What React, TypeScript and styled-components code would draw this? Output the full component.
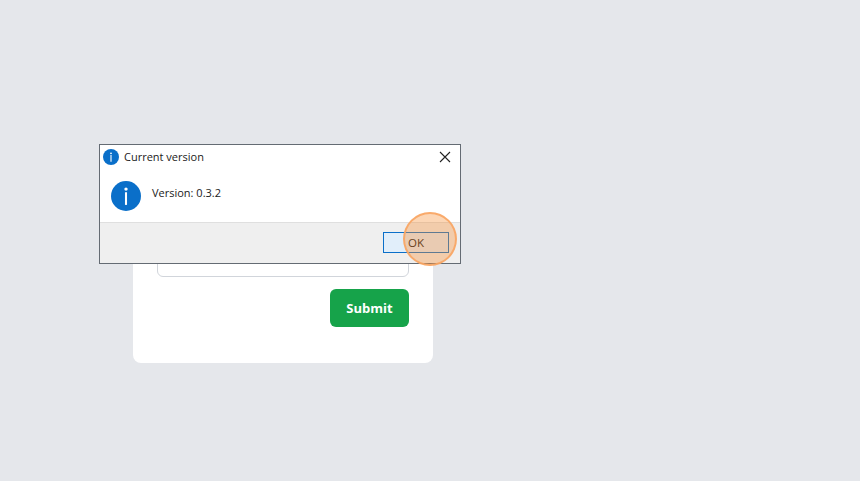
import { createGlobalStyle } from "styled-components";
import styled from "styled-components";

const GlobalStyle = createGlobalStyle`
  html, body {
    margin: 0;
    padding: 0;
    height: 100%;
    background: #e5e7eb;
    font-family: "Open Sans", "Noto Sans", sans-serif;
    overflow: hidden;
  }
`;

function InfoIcon({ size }: { size: number }) {
  return (
    <svg width={size} height={size} viewBox="0 0 32 32">
      <circle cx="16" cy="16" r="16" fill="#0a6fc9" />
      <circle cx="16" cy="8.6" r="1.8" fill="#fff" />
      <rect x="14.9" y="12" width="2.2" height="13.5" fill="#fff" />
    </svg>
  );
}

export default function App() {
  return (
    <Page>
      <GlobalStyle />
      <Card>
        <Input />
        <Actions>
          <Submit>Submit</Submit>
        </Actions>
      </Card>

      <Dialog>
        <TitleBar>
          <InfoIcon size={16} />
          <Title>Current version</Title>
          <CloseButton>
            <svg width="12" height="12" viewBox="0 0 12 12">
              <path d="M1 1L11 11M11 1L1 11" stroke="#222" strokeWidth="1.1" fill="none" />
            </svg>
          </CloseButton>
        </TitleBar>
        <Body>
          <InfoIcon size={30} />
          <Message>Version: 0.3.2</Message>
        </Body>
        <Footer>
          <OkButton>OK</OkButton>
        </Footer>
        <Highlight />
      </Dialog>
    </Page>
  );
}

const Page = styled.div`
  position: relative;
  width: 860px;
  height: 481px;
  padding: 160px 0 0 133px;
  box-sizing: border-box;
`;

const Card = styled.div`
  width: 300px;
  height: 203px;
  box-sizing: border-box;
  padding: 77px 24px 0;
  background: #fff;
  border-radius: 8px;
  display: flex;
  flex-direction: column;
  gap: 12px;
`;

const Input = styled.div`
  height: 40px;
  box-sizing: border-box;
  background: #fff;
  border: 1px solid #d1d5db;
  border-radius: 6px;
`;

const Actions = styled.div`
  display: flex;
  justify-content: flex-end;
`;

const Submit = styled.button`
  width: 79px;
  height: 38px;
  border: none;
  border-radius: 6px;
  background: #16a34a;
  color: #fff;
  font-family: "Open Sans", sans-serif;
  font-size: 13px;
  font-weight: 700;
  padding: 0;
`;

const Dialog = styled.div`
  position: absolute;
  left: 99px;
  top: 144px;
  width: 362px;
  height: 120px;
  box-sizing: border-box;
  background: #fff;
  border: 1px solid #646b73;
  display: flex;
  flex-direction: column;
  color: #1a1a1a;
`;

const TitleBar = styled.div`
  height: 24px;
  display: flex;
  align-items: center;
  padding: 0 9px 0 3px;
  gap: 5px;
`;

const Title = styled.span`
  font-size: 11px;
  line-height: 24px;
  height: 24px;
  flex: 1;
`;

const CloseButton = styled.div`
  display: flex;
  align-items: center;
`;

const Body = styled.div`
  flex: 1;
  display: flex;
  align-items: flex-start;
  padding: 12px 0 0 11px;
  gap: 11px;
`;

const Message = styled.span`
  font-size: 11px;
  line-height: 16px;
  padding-top: 4px;
`;

const Footer = styled.div`
  height: 41px;
  box-sizing: border-box;
  background: #efefef;
  border-top: 1px solid #dfdfdf;
  display: flex;
  justify-content: flex-end;
  padding: 9px 11px 0 0;
`;

const OkButton = styled.div`
  width: 66px;
  height: 21px;
  box-sizing: border-box;
  background: #e1eefa;
  border: 1px solid #0a6fc9;
  font-size: 11.5px;
  line-height: 19px;
  padding-left: 24px;
  color: #111;
`;

const Highlight = styled.div`
  position: absolute;
  left: 303px;
  top: 67px;
  width: 54px;
  height: 54px;
  box-sizing: border-box;
  border-radius: 50%;
  background: rgba(247, 140, 50, 0.36);
  border: 2px solid rgba(248, 165, 100, 0.9);
`;
